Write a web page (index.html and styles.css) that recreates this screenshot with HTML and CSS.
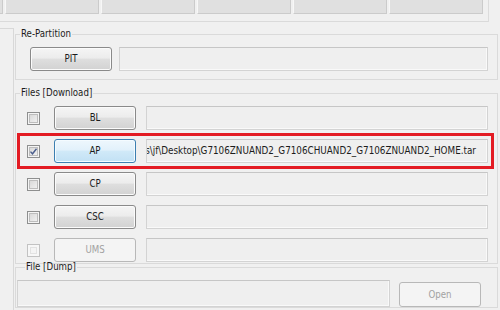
FILE: index.html
```html
<!DOCTYPE html>
<html>
<head>
<meta charset="utf-8">
<link rel="stylesheet" href="styles.css">
</head>
<body>
<div class="top">
  <div class="tabs">
    <div class="tab tab-stub"></div>
    <div class="tab"></div>
    <div class="tab"></div>
    <div class="tab"></div>
    <div class="tab"></div>
    <div class="tab"></div>
  </div>
  <div class="tabs-gap"></div>
</div>
<div class="main">
  <div class="side"></div>
  <div class="content">
    <fieldset class="group g-repart">
      <legend>Re-Partition</legend>
      <div class="repart-row">
        <button class="btn">PIT</button>
        <div class="field"></div>
      </div>
    </fieldset>
    <fieldset class="group g-files">
      <legend>Files [Download]</legend>
      <div class="rows">
        <div class="file-row">
          <span class="check"></span>
          <button class="btn">BL</button>
          <div class="field"></div>
        </div>
        <div class="file-row marked">
          <span class="check checked"><svg width="9" height="9" viewBox="0 0 9 9"><path d="M1.5 4.6 L3.5 6.8 L7.5 1.8" fill="none" stroke="#4a5d8c" stroke-width="1.4"/></svg></span>
          <button class="btn btn-focus">AP</button>
          <div class="field path"><span>C:\Users\jf\Desktop\G7106ZNUAND2_G7106CHUAND2_G7106ZNUAND2_HOME.tar</span></div>
        </div>
        <div class="file-row">
          <span class="check"></span>
          <button class="btn">CP</button>
          <div class="field"></div>
        </div>
        <div class="file-row">
          <span class="check"></span>
          <button class="btn">CSC</button>
          <div class="field"></div>
        </div>
        <div class="file-row">
          <span class="check check-off"></span>
          <button class="btn" disabled>UMS</button>
          <div class="field"></div>
        </div>
      </div>
    </fieldset>
    <fieldset class="group g-dump">
      <legend>File [Dump]</legend>
      <div class="dump-row">
        <div class="field dump-field"></div>
        <button class="btn btn-open" disabled>Open</button>
      </div>
    </fieldset>
  </div>
</div>
</body>
</html>
```

FILE: styles.css
```css
html, body {
  margin: 0;
}
body {
  width: 500px;
  height: 310px;
  overflow: hidden;
  background: #f0f0f0;
  font-family: "DejaVu Sans Condensed", "Liberation Sans", Arial, sans-serif;
  font-size: 9.6px;
  line-height: 12px;
  color: #1c1c1c;
}
.top {
  width: 489px;
  border-right: 1px solid #dcdcdc;
  box-sizing: border-box;
}
.tabs {
  display: flex;
  gap: 2px;
  height: 14px;
}
.tab {
  width: 94px;
  flex: none;
  box-sizing: border-box;
  background: #e0e0e0;
  border-left: 1px solid #f7f7f7;
  border-right: 1px solid #cbcbcb;
  border-bottom: 1px solid #cbcbcb;
}
.tab-stub {
  width: 3px;
  border-left: none;
}
.tabs-gap {
  height: 7px;
  border-bottom: 1px solid #dadada;
}
.main {
  display: flex;
  height: 288px;
}
.side {
  width: 13px;
  flex: none;
  margin-top: 6px;
  border-top: 1px solid #d8d8d8;
  border-right: 1px solid #d8d8d8;
}
.content {
  flex: 1;
  min-width: 0;
  padding: 0 2px 0 1px;
}
.group {
  min-width: 0;
  border: 1px solid #dadada;
}
.group legend {
  line-height: 12px;
  padding: 0 1px;
}
.g-repart {
  margin: 6px 0 0;
  padding: 7px 9px 8px 14px;
}
.g-repart legend {
  margin-left: -10px;
}
.g-files {
  margin: 7px 0 0;
  padding: 7px 9px 1px 7px;
}
.g-files legend {
  margin-left: -3px;
}
.g-dump {
  margin: -3px 0 0;
  padding: 7px 16px 0 1px;
}
.g-dump legend {
  margin-left: 8px;
}
.repart-row {
  display: flex;
  gap: 7px;
}
.rows {
  display: flex;
  flex-direction: column;
  gap: 9px;
}
.file-row {
  display: flex;
  align-items: center;
  height: 24px;
  padding-left: 4px;
}
.marked {
  outline: 3px solid #e31b23;
  outline-offset: 3px;
}
.check {
  width: 13px;
  height: 13px;
  flex: none;
  box-sizing: border-box;
  border: 1px solid #8e8f8f;
  background: linear-gradient(135deg, #d3d3d3, #f6f6f6);
  box-shadow: inset 0 0 0 1px #f4f4f4, inset 0 0 0 2px #bdbdbd;
  margin-right: 14px;
  display: flex;
  align-items: center;
  justify-content: center;
}
.check-off {
  border-color: #c2c2c2;
  background: #f4f4f4;
  box-shadow: inset 0 0 0 2px #f7f7f7, inset 0 0 0 3px #e2e2e2;
}
.btn {
  width: 82px;
  height: 24px;
  flex: none;
  box-sizing: border-box;
  padding: 0;
  border: 1px solid #8a8a8a;
  border-radius: 3px;
  background: linear-gradient(#f5f5f5, #ececec 45%, #dedede 52%, #d2d2d2);
  box-shadow: inset 0 0 0 1px #fbfbfb;
  font: inherit;
  color: #1c1c1c;
}
.btn-focus {
  border-color: #3c7fb1;
  background: linear-gradient(#eef7fd, #e2f1fb 45%, #d0e9f8 52%, #c2e1f4);
  box-shadow: inset 0 0 0 1px #f4fbff;
}
.btn:disabled {
  border-color: #b8b8b8;
  background: #f4f4f4;
  box-shadow: none;
  color: #a2a2a2;
}
.file-row .btn {
  margin-right: 10px;
}
.field {
  flex: 1;
  min-width: 0;
  height: 24px;
  box-sizing: border-box;
  background: #efefef;
  border: 1px solid #d3d3d3;
  border-top-color: #c6c6c6;
  box-shadow: inset -1px -1px 0 #f9f9f9;
}
.path {
  display: flex;
  align-items: center;
  justify-content: flex-end;
  overflow: hidden;
  white-space: nowrap;
  padding-right: 11px;
  font-size: 9.8px;
}
.path span {
  flex: none;
}
.dump-row {
  display: flex;
  align-items: flex-end;
  gap: 9px;
}
.dump-field {
  height: 27px;
}
.btn-open {
  height: 25px;
}
```
